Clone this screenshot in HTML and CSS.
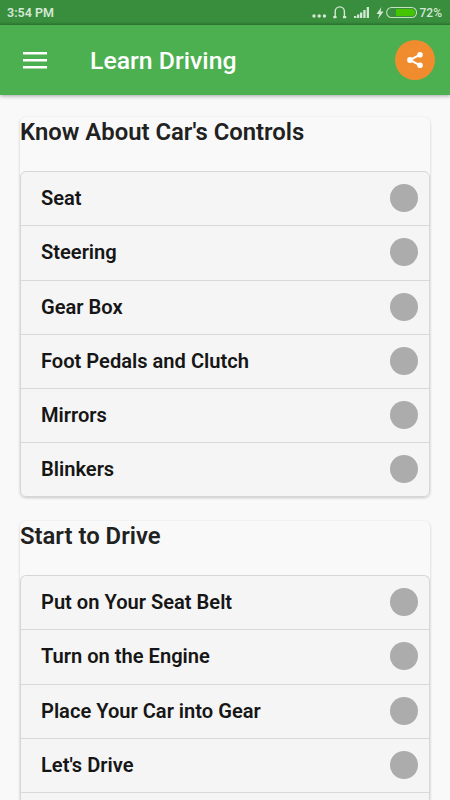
FILE: index.html
```html
<!DOCTYPE html>
<html lang="en">
<head>
    <meta charset="UTF-8">
    <meta name="viewport" content="width=device-width, initial-scale=1.0">
    <title>Learn Driving</title>
    <link rel="stylesheet" href="styles.css">
</head>
<body>
    <div class="statusbar">
        <span class="time">3:54 PM</span>
        <svg class="status-icons" width="107" height="25" viewBox="310 0 107 25">
            <g fill="#d5e8d6">
                <circle cx="314" cy="16" r="1.7"/>
                <circle cx="319.2" cy="16" r="1.7"/>
                <circle cx="324.4" cy="16" r="1.7"/>
                <path d="M333.300 16h3.200v2.300h-3.200zM343 16h3.200v2.300h-3.200z"/>
                <path d="M354 16h2.300v2h-2.300zM357 14.500h2.300v3.500h-2.300zM360 12.500h2.300v5.500h-2.300zM363.300 10h2.300v8h-2.300zM366.700 7h2.300v11h-2.300z"/>
                <path d="M381.500 7l-5 7h2.900l-1.400 5 5.500-7.500h-3z"/>
            </g>
            <path d="M335.200 17v-5.500a4.600 4.600 0 0 1 9.200 0v5.500" fill="none" stroke="#d5e8d6" stroke-width="1.400"/>
            <rect x="386.700" y="7.500" width="29.800" height="10" rx="4.800" fill="#388e3c" stroke="#c3e2be" stroke-width="1.100"/>
            <path d="M396 9h15.500a3.500 3.500 0 0 1 0 7h-15.500z" fill="#44c500"/>
        </svg>
        <span class="battery">72%</span>
    </div>

    <nav class="navbar">
        <svg class="menu" width="24" height="17" viewBox="0 0 24 17">
            <path d="M0 1.250h24M0 8.250h24M0 15.250h24" stroke="#fff" stroke-width="2.500"/>
        </svg>
        <div class="title">Learn Driving</div>
        <a href="#" class="share">
            <svg width="16" height="16" viewBox="0 0 16 16">
                <path d="M13 2.700L3 8l10 5.300" fill="none" stroke="#fff" stroke-width="2"/>
                <g fill="#fff">
                    <circle cx="13" cy="2.800" r="2.800"/>
                    <circle cx="3" cy="8" r="2.900"/>
                    <circle cx="13" cy="13.200" r="2.800"/>
                </g>
            </svg>
        </a>
    </nav>

    <div class="container">
        <div class="card">
            <h2>Know About Car's Controls</h2>
            <ul class="list">
                <li>Seat <span class="dot"></span></li>
                <li>Steering <span class="dot"></span></li>
                <li>Gear Box <span class="dot"></span></li>
                <li>Foot Pedals and Clutch <span class="dot"></span></li>
                <li>Mirrors <span class="dot"></span></li>
                <li>Blinkers <span class="dot"></span></li>
            </ul>
        </div>
        <div class="card card-last">
            <h2>Start to Drive</h2>
            <ul class="list">
                <li>Put on Your Seat Belt <span class="dot"></span></li>
                <li>Turn on the Engine <span class="dot"></span></li>
                <li>Place Your Car into Gear <span class="dot"></span></li>
                <li>Let's Drive <span class="dot"></span></li>
            </ul>
        </div>
    </div>
</body>
</html>
```
FILE: styles.css
```css
* {
    box-sizing: border-box;
}
body, html {
    margin: 0;
    padding: 0;
    height: 100%;
    font-family: Roboto, sans-serif;
    background-color: #f9f9f9;
}
body {
    display: flex;
    flex-direction: column;
    overflow: hidden;
}
.statusbar {
    display: flex;
    flex-shrink: 0;
    align-items: center;
    height: 25px;
    padding: 0 8px 0 7px;
    background: linear-gradient(#388e3c 22px, #307a34);
    color: #d5e8d6;
    font-size: 12.5px;
    font-weight: 600;
}
.status-icons {
    margin-left: auto;
    margin-right: 3px;
}
.battery {
    font-size: 12px;
    font-weight: 500;
}
.navbar {
    display: flex;
    flex-shrink: 0;
    align-items: center;
    height: 70px;
    padding: 0 15px 0 23px;
    background-color: #4caf50;
    box-shadow: 0 1px 4px rgba(0,0,0,0.35);
}
.title {
    margin-left: 43px;
    color: white;
    font-size: 24.8px;
    font-weight: 500;
}
.share {
    display: flex;
    align-items: center;
    justify-content: center;
    width: 40px;
    height: 40px;
    margin-left: auto;
    border-radius: 50%;
    background-color: #f08c2e;
}
.container {
    display: flex;
    flex: 1;
    flex-direction: column;
    min-height: 0;
    padding: 22px 20px 0;
}
.card {
    flex-shrink: 0;
    margin-bottom: 24px;
    border-radius: 6px;
    box-shadow: 0 1px 3px rgba(0,0,0,0.2);
}
h2 {
    height: 54px;
    margin: 0;
    color: #212121;
    font-size: 23.85px;
    font-weight: 600;
    line-height: 30px;
}
.list {
    margin: 0;
    padding: 0;
    list-style: none;
    border: 1px solid #d6d6d6;
    border-radius: 6px;
    background-color: #f5f5f5;
}
.list li {
    display: flex;
    align-items: center;
    justify-content: space-between;
    height: 54.3px;
    padding: 0 11.5px 1px 20px;
    border-bottom: 1px solid #d9d9d9;
    color: #161616;
    font-size: 20.1px;
    font-weight: 600;
}
.list li:last-child {
    height: 52.5px;
    border-bottom: none;
}
.dot {
    width: 28px;
    height: 28px;
    border-radius: 50%;
    background-color: #acacac;
}
/* the last card continues under the bottom edge of the screen */
.card-last {
    display: flex;
    flex: 1;
    flex-direction: column;
    min-height: 0;
    margin-bottom: 0;
    border-radius: 6px 6px 0 0;
}
.card-last .list {
    flex: 1;
    border-bottom: none;
    border-radius: 6px 6px 0 0;
}
.card-last .list li:last-child {
    height: 54.3px;
    border-bottom: 1px solid #d9d9d9;
}
```
